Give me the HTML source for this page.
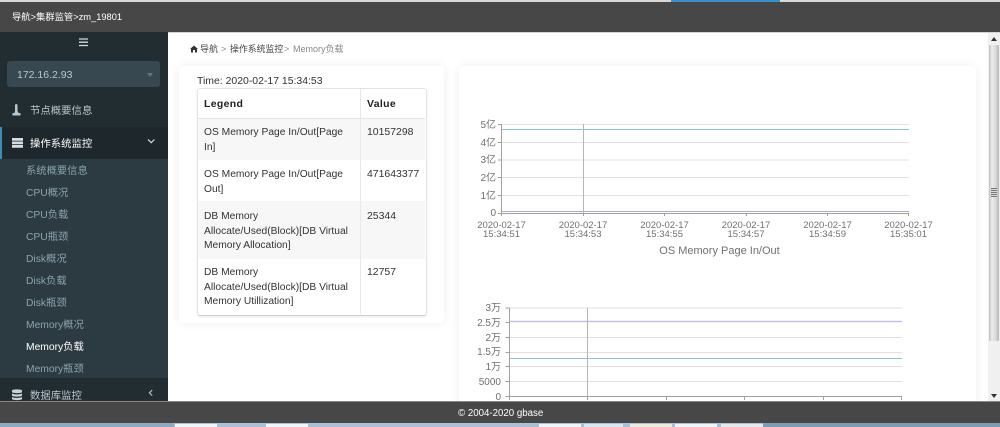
<!DOCTYPE html>
<html>
<head>
<meta charset="utf-8">
<style>
html,body{margin:0;padding:0;width:1000px;height:427px;overflow:hidden;background:#fff;font-family:"Liberation Sans","Noto Sans CJK SC",sans-serif;}
.a{position:absolute;}
.t{position:absolute;white-space:nowrap;}
.sub{position:absolute;left:26px;font-size:10.3px;line-height:14px;color:#8aa4af;white-space:nowrap;}
.card{position:absolute;background:#fff;border-radius:4px;box-shadow:0 0 10px rgba(0,0,0,.07);}
.cell{position:absolute;font-size:10.45px;line-height:14.7px;color:#333;white-space:nowrap;}
.lg{font-size:10.25px;}
svg text{font-family:"Liberation Sans","Noto Sans CJK SC",sans-serif;fill:#707070;}
</style>
</head>
<body>
<!-- top strip -->
<div class="a" style="left:0;top:0;width:1000px;height:2px;background:#d8d8d8"></div>
<div class="a" style="left:671px;top:0;width:109px;height:2px;background:#3a8fd0"></div>
<div class="a" style="left:0;top:2px;width:1000px;height:30px;background:#474747"></div>
<div class="a" style="left:0;top:32px;width:1000px;height:1px;background:#d5d5d5"></div>
<div class="t" style="left:12px;top:11px;font-size:9.3px;line-height:13px;color:#fff">导航&gt;集群监管&gt;zm_19801</div>

<!-- sidebar -->
<div class="a" style="left:0;top:32px;width:168px;height:370px;background:#222d32"></div>
<svg class="a" style="left:79px;top:38px" width="10" height="9"><path d="M0 1h9M0 4.2h9M0 7.500h9" stroke="#d5dadc" stroke-width="1.3"/></svg>
<div class="a" style="left:7px;top:61px;width:153px;height:26px;background:#374850;border-radius:3px"></div>
<div class="t" style="left:17px;top:68px;font-size:10.5px;line-height:14px;color:#b8c7ce">172.16.2.93</div>
<div class="a" style="left:147px;top:73px;width:0;height:0;border-left:3.5px solid transparent;border-right:3.5px solid transparent;border-top:4px solid #66757b"></div>

<svg class="a" style="left:11px;top:103px" width="11" height="14"><path d="M5 1a1.500 1.500 0 0 1 1.500 1.500V8l1 2H9.500v2.500h-8V10h2l.5-2V2.500A1.500 1.500 0 0 1 5 1z" fill="#b8c7ce"/></svg>
<div class="t" style="left:30px;top:104px;font-size:10.4px;line-height:15px;color:#b8c7ce">节点概要信息</div>

<div class="a" style="left:0;top:127px;width:168px;height:32px;background:#1e282c"></div>
<div class="a" style="left:0;top:127px;width:2px;height:32px;background:#3c8dbc"></div>
<svg class="a" style="left:12px;top:138px" width="12" height="11"><path d="M0 0h11v2.700H0zM0 3.500h11v2.700H0zM0 7h11v2.700H0z" fill="#d8dde0"/></svg>
<div class="t" style="left:30px;top:137px;font-size:10.4px;line-height:15px;color:#fff">操作系统监控</div>
<svg class="a" style="left:147px;top:138px" width="9" height="7"><path d="M1 1.500l3.200 3.200 3.200-3.200" fill="none" stroke="#d8dde0" stroke-width="1.200"/></svg>

<div class="a" style="left:0;top:159px;width:168px;height:219px;background:#2c3b41"></div>
<div class="sub" style="top:165px">系统概要信息</div>
<div class="sub" style="top:187px">CPU概况</div>
<div class="sub" style="top:209px">CPU负载</div>
<div class="sub" style="top:231px">CPU瓶颈</div>
<div class="sub" style="top:253px">Disk概况</div>
<div class="sub" style="top:275px">Disk负载</div>
<div class="sub" style="top:297px">Disk瓶颈</div>
<div class="sub" style="top:319px">Memory概况</div>
<div class="sub" style="top:341px;color:#fff">Memory负载</div>
<div class="sub" style="top:363px">Memory瓶颈</div>

<svg class="a" style="left:12px;top:389px" width="11" height="12"><path d="M0 1.500C0 0 10 0 10 1.500V3C10 4.500 0 4.500 0 3zM0 4.500c2 1.200 8 1.200 10 0V6.500C10 8 0 8 0 6.500zM0 8c2 1.200 8 1.200 10 0v2C10 11.500 0 11.500 0 10z" fill="#c8d0d4"/></svg>
<div class="t" style="left:30px;top:390px;font-size:10.4px;line-height:14px;color:#b8c7ce">数据库监控</div>
<svg class="a" style="left:148px;top:389px" width="6" height="8"><path d="M4.200 1L1.400 3.800l2.800 2.800" fill="none" stroke="#b8c7ce" stroke-width="1.100"/></svg>

<!-- breadcrumb -->
<svg class="a" style="left:190px;top:45px" width="8" height="8"><path d="M0 4L4 0.500 8 4H7v3.500H5V5H3v2.500H1V4z" fill="#333"/></svg>
<div class="t" style="left:200px;top:42px;font-size:9px;line-height:14px;color:#444">导航</div>
<div class="t" style="left:221px;top:42px;font-size:9px;line-height:14px;color:#888">&gt;</div>
<div class="t" style="left:230px;top:42px;font-size:8.9px;line-height:14px;color:#444">操作系统监控</div>
<div class="t" style="left:284px;top:42px;font-size:9px;line-height:14px;color:#888">&gt;</div>
<div class="t" style="left:293px;top:42px;font-size:9px;line-height:14px;color:#888">Memory负载</div>

<!-- left card -->
<div class="card" style="left:179px;top:66px;width:265px;height:257px"></div>
<div class="t" style="left:197px;top:75px;font-size:10.45px;line-height:14px;color:#333">Time: 2020-02-17 15:34:53</div>
<div class="a" style="left:197px;top:88px;width:228px;height:226px;border:1px solid #e4e4e4;border-bottom:1px solid #d0d0d0;border-radius:3px;box-shadow:0 1px 2px rgba(0,0,0,.08);background:#fff"></div>
<div class="a" style="left:198px;top:118px;width:227px;height:1px;background:#e4e4e4"></div>
<div class="a" style="left:198px;top:119px;width:227px;height:41px;background:#f7f7f7"></div>
<div class="a" style="left:198px;top:201px;width:227px;height:58px;background:#f7f7f7"></div>
<div class="a" style="left:360px;top:89px;width:1px;height:225px;background:#e8e8e8"></div>
<div class="cell" style="left:204px;top:98px;font-weight:bold;color:#222;letter-spacing:.35px">Legend</div>
<div class="cell" style="left:367px;top:98px;font-weight:bold;color:#222;letter-spacing:.35px">Value</div>
<div class="cell lg" style="left:204px;top:126px">OS Memory Page In/Out[Page<br>In]</div>
<div class="cell" style="left:367px;top:126px">10157298</div>
<div class="cell lg" style="left:204px;top:168px">OS Memory Page In/Out[Page<br>Out]</div>
<div class="cell" style="left:367px;top:168px">471643377</div>
<div class="cell lg" style="left:204px;top:210px">DB Memory<br>Allocate/Used(Block)[DB Virtual<br>Memory Allocation]</div>
<div class="cell" style="left:367px;top:210px">25344</div>
<div class="cell lg" style="left:204px;top:266px">DB Memory<br>Allocate/Used(Block)[DB Virtual<br>Memory Utillization]</div>
<div class="cell" style="left:367px;top:266px">12757</div>

<!-- right card -->
<div class="card" style="left:459px;top:66px;width:517px;height:350px"></div>

<svg class="a" style="left:0;top:0" width="1000" height="402">
 <!-- chart 1 -->
 <g stroke="#e0e0e0" stroke-width="1" fill="none">
  <path d="M501.500 124.500H909M501.500 142.500H909M501.500 160H909M501.500 177.500H909M501.500 195.500H909"/>
 </g>
 <path d="M501.500 129.500H909" stroke="#8cc4c8" stroke-width="1"/>
 <path d="M501.500 211.500H909" stroke="#b6a2de" stroke-width="1"/>
 <path d="M583.500 124V213" stroke="#b5b5b5" stroke-width="1"/>
 <path d="M501.500 124V213.500H909M498 124.500h4M498 142.500h4M498 160h4M498 177.500h4M498 195.500h4M498 213.500h4M501.500 213v3M583.500 213v3M664.500 213v3M746.500 213v3M827.500 213v3M908.500 213v3" stroke="#a0a0a0" stroke-width="1" fill="none"/>
 <g font-size="10" text-anchor="end">
  <text x="496" y="128">5亿</text><text x="496" y="146">4亿</text><text x="496" y="163">3亿</text><text x="496" y="181">2亿</text><text x="496" y="199">1亿</text><text x="496" y="216">0</text>
 </g>
 <g font-size="9.500" text-anchor="middle">
  <text x="501.500" y="228">2020-02-17</text><text x="501.500" y="237">15:34:51</text>
  <text x="583" y="228">2020-02-17</text><text x="583" y="237">15:34:53</text>
  <text x="664.500" y="228">2020-02-17</text><text x="664.500" y="237">15:34:55</text>
  <text x="746" y="228">2020-02-17</text><text x="746" y="237">15:34:57</text>
  <text x="827.500" y="228">2020-02-17</text><text x="827.500" y="237">15:34:59</text>
  <text x="908.500" y="228">2020-02-17</text><text x="908.500" y="237">15:35:01</text>
 </g>
 <text x="719.500" y="254" font-size="11" text-anchor="middle">OS Memory Page In/Out</text>

 <!-- chart 2 -->
 <g stroke="#e0e0e0" stroke-width="1" fill="none">
  <path d="M509 308H902M509 337.500H902M509 352.500H902M509 366.500H902M509 381.500H902"/>
 </g>
 <path d="M509 321.500H902" stroke="#cbbdea" stroke-width="1.500"/>
 <path d="M509 358.500H902" stroke="#8cc4c8" stroke-width="1"/>
 <path d="M587.500 308V397" stroke="#b5b5b5" stroke-width="1"/>
 <path d="M509.500 308V396.500H902M505.500 308h4M505.500 322.500h4M505.500 337.500h4M505.500 352.500h4M505.500 366.500h4M505.500 381.500h4M505.500 396.500h4M509.500 396v4M587.500 396v4M666.500 396v4M744.500 396v4M823.500 396v4M901.500 396v4" stroke="#a0a0a0" stroke-width="1" fill="none"/>
 <g font-size="10" text-anchor="end">
  <text x="501" y="311">3万</text><text x="501" y="326">2.5万</text><text x="501" y="341">2万</text><text x="501" y="355">1.5万</text><text x="501" y="370">1万</text><text x="501" y="385">5000</text><text x="501" y="400">0</text>
 </g>
</svg>

<!-- scrollbar -->
<div class="a" style="left:988px;top:33px;width:12px;height:369px;background:#f0f0f0"></div>
<div class="a" style="left:989px;top:45px;width:10px;height:296px;background:linear-gradient(90deg,#c0c0c0,#ececec 30%,#d8d8d8 70%,#b5b5b5);border-radius:1px"></div>
<div class="a" style="left:991px;top:188px;width:6px;height:9px;background:repeating-linear-gradient(180deg,#777 0 1px,#ddd 1px 2px)"></div>
<div class="a" style="left:991px;top:37px;width:0;height:0;border-left:3.500px solid transparent;border-right:3.500px solid transparent;border-bottom:4px solid #333"></div>
<div class="a" style="left:991px;top:394px;width:0;height:0;border-left:3.500px solid transparent;border-right:3.500px solid transparent;border-top:4px solid #333"></div>

<!-- footer -->
<div class="a" style="left:0;top:401px;width:1000px;height:1px;background:#888"></div>
<div class="a" style="left:0;top:402px;width:1000px;height:21px;background:#474747"></div>
<div class="t" style="left:458px;top:407px;font-size:9.700px;line-height:14px;color:#fff">© 2004-2020 gbase</div>

<!-- taskbar -->
<div class="a" style="left:0;top:423px;width:1000px;height:4px;background:#a9c0d6"></div>
<div class="a" style="left:0;top:423px;width:174px;height:4px;background:#8ea9c4"></div>
<div class="a" style="left:175px;top:424px;width:42px;height:3px;background:#f4f4f4"></div>
<div class="a" style="left:266px;top:424px;width:42px;height:3px;background:#f4f4f4"></div>
<div class="a" style="left:539px;top:424px;width:42px;height:3px;background:#f4f4f4"></div>
<div class="a" style="left:584px;top:424px;width:39px;height:3px;background:#dce6f0"></div>
<div class="a" style="left:630px;top:424px;width:42px;height:3px;background:#f0ead8"></div>
<div class="a" style="left:675px;top:424px;width:42px;height:3px;background:#f4f4f4"></div>
<div class="a" style="left:721px;top:424px;width:42px;height:3px;background:#e8e8e8"></div>
<div class="a" style="left:763px;top:423px;width:237px;height:4px;background:#7f9ab5"></div>
</body>
</html>
